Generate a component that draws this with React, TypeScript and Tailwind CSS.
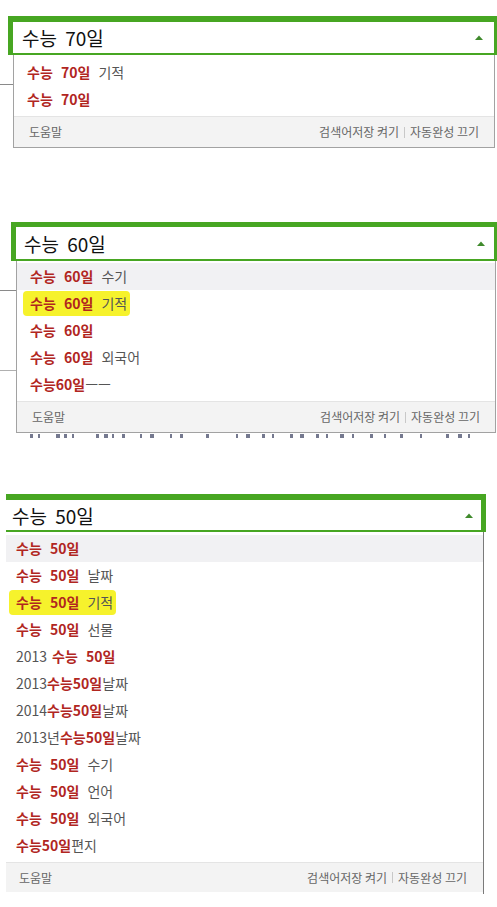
import React from "react";

type Part = [string, "k" | "n", string?];
type Row = { parts: Part[]; hover?: boolean; mark?: boolean };

const FONT = { fontFamily: '"Noto Sans CJK KR", "Noto Sans", sans-serif' };

function Arrow() {
  return (
    <svg width="8" height="5" viewBox="0 0 8 5" className="shrink-0">
      <path d="M0 5 L4 0.5 L8 5 Z" fill="#3f8a2c" />
    </svg>
  );
}

function Item({ row, pl }: { row: Row; pl: string }) {
  const content = row.parts.map((p, i) =>
    p[1] === "k" ? (
      <span key={i} className={`font-bold text-[#b1261f] ${p[2] ?? ""}`}>
        {p[0]}
      </span>
    ) : (
      <span key={i} className={`text-[#555555] ${p[2] ?? ""}`}>
        {p[0]}
      </span>
    )
  );
  return (
    <div
      className={`flex h-[27px] items-center ${pl} ${row.hover ? "bg-[#f1f1f3]" : ""}`}
    >
      {row.mark ? (
        <span className="-ml-[7px] rounded-[4px] bg-[#f6f22c] py-[3px] pl-[7px] pr-[3px] text-[14px] leading-[19px] whitespace-pre [word-spacing:5px]">
          {content}
        </span>
      ) : (
        <span className="text-[14px] leading-[19px] whitespace-pre [word-spacing:5px]">
          {content}
        </span>
      )}
    </div>
  );
}

function Footer({ pl, pr, h }: { pl: string; pr: string; h: string }) {
  return (
    <div
      className={`flex ${h} items-center justify-between border-t border-[#e4e4e4] bg-[#f3f3f3] ${pl} ${pr} text-[12px] text-[#666666]`}
    >
      <span>도움말</span>
      <span className="flex items-center">
        <span>검색어저장 켜기</span>
        <span className="mx-[5px] inline-block h-[11px] w-px bg-[#c8c8c8]" />
        <span>자동완성 끄기</span>
      </span>
    </div>
  );
}

const rows1: Row[] = [
  { parts: [["수능 70일", "k"], [" 기적", "n"]] },
  { parts: [["수능 70일", "k"]] },
];

const rows2: Row[] = [
  { parts: [["수능 60일", "k"], [" 수기", "n"]], hover: true },
  { parts: [["수능 60일", "k"], [" 기적", "n"]], mark: true },
  { parts: [["수능 60일", "k"]] },
  { parts: [["수능 60일", "k"], [" 외국어", "n"]] },
  { parts: [["수능60일", "k"], ["ㅡㅡ", "n"]] },
];

const rows3: Row[] = [
  { parts: [["수능 50일", "k"]], hover: true },
  { parts: [["수능 50일", "k"], [" 날짜", "n"]] },
  { parts: [["수능 50일", "k"], [" 기적", "n"]], mark: true },
  { parts: [["수능 50일", "k"], [" 선물", "n"]] },
  { parts: [["2013", "n"], ["수능 50일", "k", "ml-[5px]"]] },
  { parts: [["2013", "n"], ["수능50일", "k"], ["날짜", "n"]] },
  { parts: [["2014", "n"], ["수능50일", "k"], ["날짜", "n"]] },
  { parts: [["2013년", "n"], ["수능50일", "k"], ["날짜", "n"]] },
  { parts: [["수능 50일", "k"], [" 수기", "n"]] },
  { parts: [["수능 50일", "k"], [" 언어", "n"]] },
  { parts: [["수능 50일", "k"], [" 외국어", "n"]] },
  { parts: [["수능50일", "k"], ["편지", "n"]] },
];

// small scattered glyph fragments of page text peeking out under panel 2
const sliver: [number, number][] = [
  [30, 3], [38, 2], [56, 4], [64, 3], [72, 2], [96, 3], [104, 4], [112, 2],
  [122, 3], [140, 2], [150, 4], [170, 2], [180, 3], [206, 3], [236, 2],
  [246, 4], [262, 3], [272, 2], [290, 3], [300, 4], [316, 3], [326, 2],
  [340, 4], [352, 2], [370, 3], [384, 2], [400, 3], [420, 2], [446, 3],
  [458, 4], [468, 2],
];

export default function App() {
  return (
    <div
      className="relative h-[907px] w-[497px] overflow-hidden bg-white"
      style={FONT}
    >
      {/* Panel 1 */}
      <section className="relative pt-[16px]">
        <div className="absolute left-0 top-[84px] h-px w-[13px] bg-[#8a8a8a]" />
        <div className="relative ml-[8px] flex h-[39px] w-[491px] items-center border-x-[5px] border-b-2 border-t-[6px] border-[#47a622] bg-white pl-[9px] pr-[11px]">
          <span className="flex-1 text-[19px] leading-none text-[#111111] [word-spacing:4px]">
            수능 70일
          </span>
          <Arrow />
        </div>
        <div className="relative ml-[13px] w-[482px] border-x border-b border-[#a2a2a2] bg-white">
          <div className="pb-[3px] pt-[4px]">
            {rows1.map((r, i) => (
              <Item key={i} row={r} pl="pl-[13px]" />
            ))}
          </div>
          <Footer pl="pl-[15px]" pr="pr-[15px]" h="h-[31px]" />
        </div>
      </section>

      {/* Panel 2 */}
      <section className="relative mt-[74px]">
        <div className="absolute left-0 top-[68px] h-px w-[16px] bg-[#8a8a8a]" />
        <div className="absolute left-0 top-[148px] h-px w-[16px] bg-[#b0b0b0]" />
        <div className="relative ml-[11px] flex h-[39px] w-[488px] items-center border-x-[5px] border-b-2 border-t-[5px] border-[#47a622] bg-white pl-[8px] pr-[9px]">
          <span className="flex-1 text-[19px] leading-none text-[#111111] [word-spacing:4px]">
            수능 60일
          </span>
          <Arrow />
        </div>
        <div className="relative ml-[16px] w-[480px] border-x border-b border-[#a2a2a2] bg-white">
          <div className="pb-[3px] pt-[2px]">
            {rows2.map((r, i) => (
              <Item key={i} row={r} pl="pl-[13px]" />
            ))}
          </div>
          <Footer pl="pl-[15px]" pr="pr-[15px]" h="h-[31px]" />
        </div>
        <div className="flex h-[7px] items-start">
          {sliver.map(([x, w], i) => (
            <div
              key={i}
              className="h-[4px] bg-[#3a4060] opacity-70"
              style={{
                marginLeft:
                  i === 0 ? x : x - (sliver[i - 1][0] + sliver[i - 1][1]),
                width: w,
                marginTop: 1,
              }}
            />
          ))}
        </div>
      </section>

      {/* Panel 3 */}
      <section className="relative mt-[54px]">
        <div className="relative ml-[6px] flex h-[38px] w-[480px] items-center border-b-2 border-r-[5px] border-t-[6px] border-[#47a622] bg-white pl-[6px] pr-[8px]">
          <span className="flex-1 text-[19px] leading-none text-[#111111] [word-spacing:4px]">
            수능 50일
          </span>
          <Arrow />
        </div>
        <div className="relative ml-[6px] w-[478px] border-r border-[#7a7a7a] bg-white pb-[2px]">
          <div className="pb-[3px] pt-[3px]">
            {rows3.map((r, i) => (
              <Item key={i} row={r} pl="pl-[10px]" />
            ))}
          </div>
          <Footer pl="pl-[13px]" pr="pr-[16px]" h="h-[30px]" />
        </div>
      </section>
    </div>
  );
}
